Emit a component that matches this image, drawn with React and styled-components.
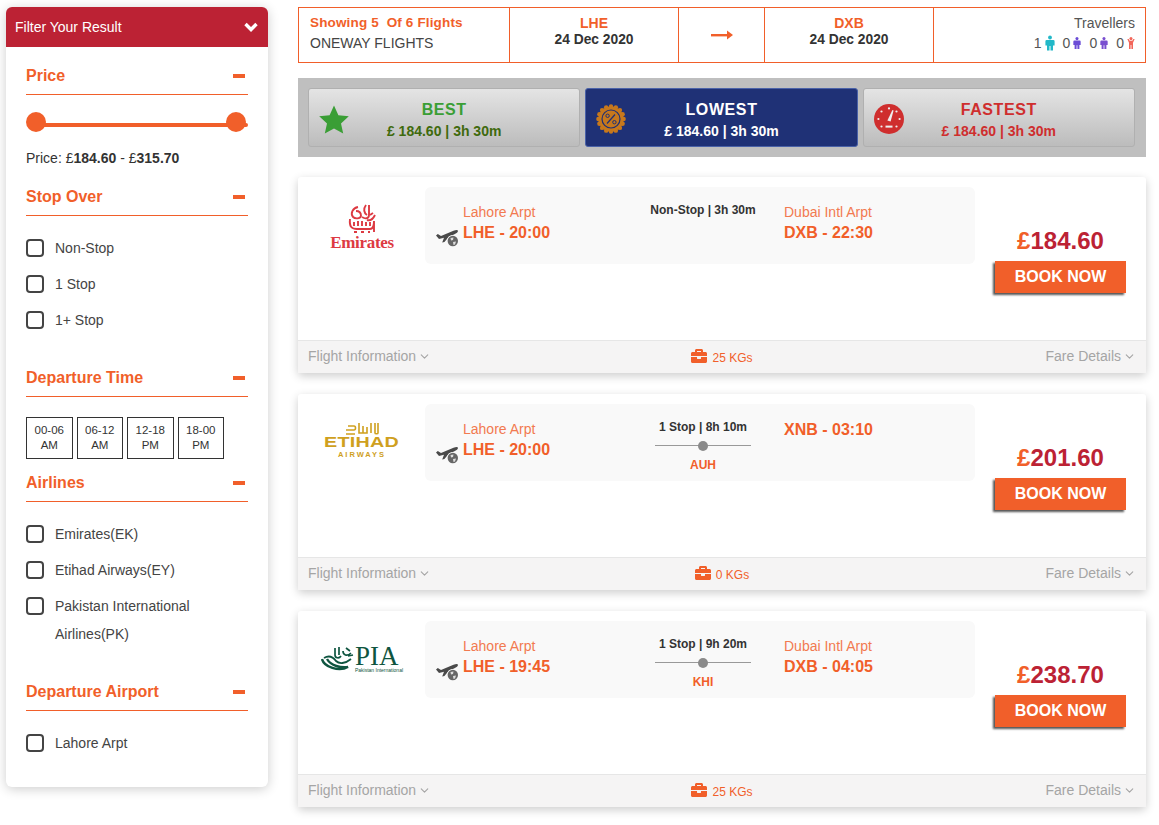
import React from "react";
import styled, { createGlobalStyle } from "styled-components";
import { FaBriefcase } from "react-icons/fa";
import { ChevronDown } from "lucide-react";

const ORANGE = "#f15f2a";
const RED = "#bc2234";

const GlobalStyle = createGlobalStyle`
  html, body {
    margin: 0;
    padding: 0;
    background: #fff;
    font-family: "Liberation Sans", Arial, sans-serif;
    color: #333;
  }
  * {
    box-sizing: border-box;
  }
`;

const Page = styled.div`
  display: flex;
  align-items: flex-start;
  gap: 30px;
  padding: 7px 13px 18px 6px;
`;

/* sidebar */
const Sidebar = styled.aside`
  width: 262px;
  flex: none;
  background: #fff;
  border-radius: 6px;
  box-shadow: 0 2px 12px rgba(0, 0, 0, 0.2);
  padding-bottom: 26px;
`;
const FilterHead = styled.div`
  height: 40px;
  background: ${RED};
  border-radius: 6px 6px 0 0;
  color: #fff;
  font-size: 14px;
  display: flex;
  align-items: center;
  justify-content: space-between;
  padding: 0 10px 0 9px;
`;
const Section = styled.section`
  padding: 0 20px;
  margin-top: ${props => props.$top}px;
`;
const SectionHead = styled.div`
  height: 32px;
  padding: 0 3px 5px 0;
  border-bottom: 1px solid ${ORANGE};
  color: ${ORANGE};
  font-size: 16px;
  font-weight: bold;
  line-height: 24px;
  display: flex;
  justify-content: space-between;
  align-items: center;
`;
const Minus = styled.span`
  width: 12px;
  height: 4px;
  background: ${ORANGE};
`;
const Slider = styled.div`
  height: 20px;
  margin-top: 17px;
  display: flex;
  justify-content: space-between;
  padding-right: 2px;
  position: relative;
  &::before {
    content: "";
    position: absolute;
    left: 2px;
    right: 0;
    top: 11px;
    height: 4px;
    border-radius: 2px;
    background: ${ORANGE};
  }
`;
const Knob = styled.span`
  width: 20px;
  height: 20px;
  border-radius: 50%;
  background: ${ORANGE};
  position: relative;
`;
const PriceText = styled.div`
  font-size: 14px;
  line-height: 22px;
  margin-top: 15px;
  b {
    color: #333;
  }
`;
const CheckList = styled.div`
  margin-top: 14px;
`;
const CheckRow = styled.label`
  display: flex;
  align-items: flex-start;
  gap: 11px;
  padding: 4px 0;
  font-size: 14px;
  line-height: 28px;
  color: #444;
`;
const Box = styled.span`
  width: 18px;
  height: 18px;
  flex: none;
  margin-top: 5px;
  border: 2px solid #444;
  border-radius: 4px;
  background: #fff;
`;
const TimeRow = styled.div`
  display: flex;
  gap: 4px;
  margin-top: 20px;
`;
const TimeBox = styled.div`
  width: 46.5px;
  height: 42px;
  border: 1px solid #333;
  font-size: 11.5px;
  line-height: 15px;
  text-align: center;
  color: #333;
  display: flex;
  flex-direction: column;
  justify-content: center;
`;

/* right side */
const Main = styled.main`
  width: 848px;
  flex: none;
`;
const Summary = styled.div`
  height: 56px;
  border: 1px solid ${ORANGE};
  display: grid;
  grid-template-columns: 210px 169px 86px 169px 1fr;
`;
const SummaryCell = styled.div`
  border-left: ${props => (props.$first ? "none" : `1px solid ${ORANGE}`)};
  display: flex;
  flex-direction: column;
  justify-content: center;
  align-items: center;
  padding-bottom: ${props => (props.$lift ? 4 : 0)}px;
`;
const ShowingCell = styled(SummaryCell)`
  align-items: flex-start;
  padding-left: 11px;
  font-size: 14px;
  line-height: 20px;
  color: #444;
`;
const Showing = styled.div`
  color: ${ORANGE};
  font-size: 13.5px;
  font-weight: bold;
  letter-spacing: 0.15px;
  white-space: pre;
`;
const Code = styled.div`
  color: ${ORANGE};
  font-size: 14px;
  font-weight: bold;
  line-height: 18px;
  margin-top: -4px;
`;
const DateText = styled.div`
  font-size: 13.8px;
  font-weight: bold;
  line-height: 16px;
`;
const TravellerCell = styled(SummaryCell)`
  align-items: flex-end;
  padding-right: 10px;
  font-size: 14px;
  color: #555;
  line-height: 20px;
`;
const TravellerRow = styled.div`
  display: flex;
  align-items: center;
  gap: 3px;
  height: 20px;
`;
const TravellerCount = styled.span`
  margin-left: ${props => (props.$first ? 0 : 5)}px;
`;
const Tabs = styled.div`
  margin-top: 15px;
  height: 79px;
  background: #bfbfbf;
  padding: 10px 11px 10px 10px;
  display: flex;
  gap: 5px;
`;
const Tab = styled.div`
  flex: 1;
  border-radius: 3px;
  border: 1px solid ${props => (props.$active ? "#4a62a8" : "#b0b0b0")};
  background: ${props =>
    props.$active ? "#1f3176" : "linear-gradient(#e4e4e4, #bcbcbc)"};
  display: grid;
  grid-template-columns: 1fr auto 1fr;
  align-items: center;
  padding: 0 10px;
  text-align: center;
`;
const TabIcon = styled.div`
  display: flex;
  margin-top: 3px;
`;
const TabText = styled.div`
  padding-top: 5px;
`;
const TabTitle = styled.div`
  color: ${props => props.$color};
  font-size: 16px;
  font-weight: bold;
  letter-spacing: 0.6px;
  line-height: 20px;
`;
const TabSub = styled.div`
  color: ${props => props.$color};
  font-size: 14px;
  font-weight: bold;
  line-height: 20px;
  margin-top: 1px;
`;
const Cards = styled.div`
  margin-top: 20px;
  display: flex;
  flex-direction: column;
  gap: 21px;
`;
const Card = styled.article`
  height: 196px;
  background: #fff;
  box-shadow: 0 3px 10px rgba(0, 0, 0, 0.2);
  border-radius: 3px;
  display: flex;
  flex-direction: column;
`;
const CardBody = styled.div`
  height: 163px;
  display: grid;
  grid-template-columns: 127px 550px 1fr;
  padding-top: 10px;
`;
const LogoCell = styled.div`
  display: flex;
  flex-direction: column;
  align-items: center;
  padding-top: ${props => props.$top}px;
  padding-left: 1px;
`;
const Route = styled.div`
  height: 77px;
  background: #f9f9f9;
  border-radius: 6px;
  display: grid;
  grid-template-columns: 204px 126px 1fr;
  padding: 16px 0 0 11px;
`;
const Origin = styled.div`
  display: flex;
  gap: 5px;
`;
const PlaneWrap = styled.div`
  width: 22px;
  height: 20px;
  margin-top: 25px;
  display: flex;
`;
const Place = styled.div`
  font-size: 14px;
  line-height: 18px;
  color: #f27a50;
`;
const Clock = styled.div`
  font-size: 16px;
  font-weight: bold;
  line-height: 18px;
  color: ${ORANGE};
  margin-top: 3px;
  &:first-child {
    margin-top: 1px;
  }
`;
const Middle = styled.div`
  display: flex;
  flex-direction: column;
  align-items: center;
  margin-top: -1px;
  padding: 0 15px;
`;
const Duration = styled.div`
  font-size: 12px;
  font-weight: bold;
  line-height: 16px;
  color: #333;
  white-space: nowrap;
`;
const StopLine = styled.div`
  width: 96px;
  height: 10px;
  margin-top: 6px;
  display: flex;
  justify-content: center;
  position: relative;
  &::before {
    content: "";
    position: absolute;
    left: 0;
    right: 0;
    top: 4px;
    height: 1px;
    background: #999;
  }
`;
const StopDot = styled.span`
  width: 10px;
  height: 10px;
  border-radius: 50%;
  background: #8a8a8a;
  position: relative;
`;
const StopCode = styled.div`
  font-size: 12px;
  font-weight: bold;
  line-height: 14px;
  color: ${ORANGE};
  margin-top: 7px;
`;
const Destination = styled.div`
  padding-left: 18px;
`;
const PriceCell = styled.div`
  display: flex;
  flex-direction: column;
  align-items: center;
  padding-top: 40px;
`;
const Amount = styled.div`
  font-size: 24px;
  font-weight: bold;
  line-height: 28px;
  color: ${RED};
  span {
    color: ${ORANGE};
  }
`;
const BookNow = styled.button`
  width: 131px;
  height: 32px;
  margin-top: 6px;
  border: none;
  background: ${ORANGE};
  color: #fff;
  font-family: inherit;
  font-size: 16px;
  font-weight: bold;
  padding: 0;
  box-shadow: -2px 2px 2px #555;
`;
const CardFoot = styled.div`
  height: 33px;
  background: #f5f4f4;
  border-top: 1px solid #e6e6e6;
  display: grid;
  grid-template-columns: 1fr auto 1fr;
  align-items: center;
  padding: 0 10px;
  font-size: 14px;
  color: #a5a5a5;
`;
const FootLink = styled.div`
  display: flex;
  align-items: center;
  gap: 2px;
  padding-bottom: 2px;
  justify-content: ${props => (props.$end ? "flex-end" : "flex-start")};
`;
const Baggage = styled.div`
  display: flex;
  align-items: center;
  gap: 5px;
  color: ${ORANGE};
  font-size: 12px;
  svg {
    margin-top: -3px;
  }
  span {
    margin-top: 2px;
  }
`;

/* logos */
const EmiratesWord = styled.div`
  font-family: "Liberation Serif", serif;
  font-weight: bold;
  font-size: 17px;
  line-height: 15px;
  color: #dd3a42;
  letter-spacing: -0.3px;
`;
const EtihadWord = styled.div`
  font-size: 14.5px;
  font-weight: bold;
  line-height: 14px;
  color: #cfa01e;
  transform: scaleX(1.36);
  letter-spacing: 0.2px;
`;
const EtihadSub = styled.div`
  font-size: 7.5px;
  font-weight: bold;
  line-height: 10px;
  letter-spacing: 2px;
  color: #cfa01e;
  margin-top: 1px;
`;
const PiaRow = styled.div`
  display: flex;
  align-items: flex-end;
  gap: 1px;
`;
const PiaStack = styled.div`
  display: flex;
  flex-direction: column;
  align-items: flex-start;
`;
const PiaWord = styled.div`
  font-family: "Liberation Serif", serif;
  font-size: 27px;
  line-height: 22px;
  color: #0f5540;
`;
const PiaSub = styled.div`
  font-size: 5px;
  line-height: 6px;
  color: #0f5540;
  white-space: nowrap;
`;

const WhiteChevron = () => (
  <svg width="14" height="10" viewBox="0 0 14 10">
    <polyline points="1.5,2 7,7.5 12.5,2" fill="none" stroke="#fff" strokeWidth="3.4" />
  </svg>
);

const LongArrow = () => (
  <svg width="22" height="12" viewBox="0 0 22 12">
    <rect x="0" y="5" width="18" height="2.4" fill={ORANGE} />
    <polygon points="16,1.5 22,6 16,10.5" fill={ORANGE} />
  </svg>
);

const Person = ({ color, w, h, arms }) => (
  <svg width={w} height={h} viewBox="0 0 12 18">
    <circle cx="6" cy="2.4" r="2.3" fill={color} />
    {arms ? (
      <path
        d="M0.5 3 L2.5 3 L4 5.5 L8 5.5 L9.5 3 L11.5 3 L9 8.5 L9 18 L6.6 18 L6.6 12 L5.4 12 L5.4 18 L3 18 L3 8.5 Z"
        fill={color}
      />
    ) : (
      <path
        d="M2 5.4 L10 5.4 Q11.5 5.4 11.5 7 L11.5 12 L9.6 12 L9.6 18 L6.6 18 L6.6 12.5 L5.4 12.5 L5.4 18 L2.4 18 L2.4 12 L0.5 12 L0.5 7 Q0.5 5.4 2 5.4 Z"
        fill={color}
      />
    )}
  </svg>
);

const Star = () => (
  <svg width="30" height="29" viewBox="0 0 30 29">
    <polygon
      points="15,0.5 19.4,10.2 29.8,11.3 22,18.4 24.2,28.6 15,23.4 5.8,28.6 8,18.4 0.2,11.3 10.6,10.2"
      fill="#3a9e35"
    />
  </svg>
);

const PercentBadge = () => {
  const teeth = [];
  for (let i = 0; i < 16; i++) {
    teeth.push(
      <circle
        key={i}
        cx={15 + 12.6 * Math.cos((i * Math.PI) / 8)}
        cy={15 + 12.6 * Math.sin((i * Math.PI) / 8)}
        r="2.2"
        fill="#c7781c"
      />
    );
  }
  return (
    <svg width="30" height="30" viewBox="0 0 30 30">
      {teeth}
      <circle cx="15" cy="15" r="12.6" fill="#c7781c" />
      <circle cx="15" cy="15" r="9" fill="none" stroke="#1f3176" strokeWidth="1.2" />
      <line x1="19" y1="10.5" x2="11" y2="19.5" stroke="#1f3176" strokeWidth="1.2" />
      <circle cx="11.6" cy="11.8" r="1.7" fill="none" stroke="#1f3176" strokeWidth="1" />
      <circle cx="18.4" cy="18.2" r="1.7" fill="none" stroke="#1f3176" strokeWidth="1" />
    </svg>
  );
};

const Gauge = () => (
  <svg width="30" height="30" viewBox="0 0 30 30">
    <circle cx="15" cy="15" r="15" fill="#cf2e2e" />
    <path d="M18.4 6 L19.6 6.5 L16.6 17.5 L13.4 16.5 Z" fill="#eee" />
    <rect x="11.5" y="21.6" width="7" height="2" fill="#eee" />
    <circle cx="15" cy="4.4" r="1.1" fill="#eee" />
    <circle cx="7.5" cy="7.5" r="1.1" fill="#eee" />
    <circle cx="4.4" cy="15" r="1.1" fill="#eee" />
    <circle cx="25.6" cy="15" r="1.1" fill="#eee" />
    <circle cx="22.5" cy="7.5" r="1.1" fill="#eee" />
    <circle cx="7.5" cy="22.5" r="1.1" fill="#eee" />
    <circle cx="22.5" cy="22.5" r="1.1" fill="#eee" />
  </svg>
);

const PlaneGlobe = () => (
  <svg width="22" height="20" viewBox="0 0 22 20">
    <path
      d="M0 7.5 L1.8 6 L5 8 L17.5 2.8 Q21.4 1.4 22 2.8 Q22 4.8 18 6.5 L13 8.6 L8.4 14 L6.2 14.6 L8 9.8 L3 11 Z"
      fill="#4a4a4a"
    />
    <circle cx="16.8" cy="13" r="6" fill="#f9f9f9" />
    <circle cx="16.8" cy="13" r="5.2" fill="#666" />
    <path d="M14.5 10 L17.5 9.5 L17 12 L15 12.5 Z M17 14 L20 13.5 L19 16.5 L17.5 17 Z" fill="#ddd" />
  </svg>
);

const EmiratesLogo = () => (
  <LogoCell $top={17}>
    <svg width="28" height="31" viewBox="0 0 28 31" fill="none" stroke="#dd3a42" strokeWidth="1.9">
      <path d="M18 1 C15 5 16 9 19 11 M21 1 L21 11 C21 15 17 15 14 13" />
      <path d="M10 3 C5 4 2 9 5 13 C7 15 12 15 13 12 C13 8 10 7 8 7" />
      <path d="M27 11 C25 15 22 17 19 16 M25 9 L22 11" />
      <path d="M2 15 C1 23 4 25 9 25 L22 25 C25 25 26 22 26 17 L26 28" />
      <path d="M6 18 L6 22 M10 17 L10 22 M14 17 L14 22 M18 18 L18 22 M22 18 L22 22" />
      <path d="M6 28 L9 28 M13 28 L16 28 M20 28 L22 28" />
    </svg>
    <EmiratesWord>Emirates</EmiratesWord>
  </LogoCell>
);

const EtihadLogo = () => (
  <LogoCell $top={18}>
    <svg width="34" height="13" viewBox="0 0 34 13" fill="none" stroke="#cfa01e" strokeWidth="1.6">
      <path d="M1 8 L9 8 C11 8 11 4 9 4 L3 4 M1 12 L10 12" />
      <path d="M14 1 L14 11 L22 11 L22 5 M18 4 L18 11" />
      <path d="M26 1 L26 11 M30 1 L30 11 C30 12 33 12 33 11 L33 1" />
    </svg>
    <EtihadWord>ETIHAD</EtihadWord>
    <EtihadSub>AIRWAYS</EtihadSub>
  </LogoCell>
);

const PiaLogo = () => (
  <LogoCell $top={24}>
    <PiaRow>
      <svg width="33" height="27" viewBox="0 0 33 27" fill="none" stroke="#0f5540" strokeWidth="2.4">
        <path d="M1 13 C3 21 18 26 27 21 C20 22 10 20 6 13" />
        <path d="M3 12 C8 9 12 11 15 15 C18 18 24 18 30 13" strokeWidth="1.8" />
        <path d="M14 2 L14 9 C14 12 18 13 20 10 M18 1 L18 9 M22 5 C22 9 26 11 30 7 M25 2 L29 5 M27 10 L32 9" strokeWidth="1.7" />
      </svg>
      <PiaStack>
        <PiaWord>PIA</PiaWord>
        <PiaSub>Pakistan International</PiaSub>
      </PiaStack>
    </PiaRow>
  </LogoCell>
);

const flights = [
  {
    id: "ek",
    Logo: EmiratesLogo,
    time: "LHE - 20:00",
    duration: "Non-Stop | 3h 30m",
    arrivalName: "Dubai Intl Arpt",
    arrival: "DXB - 22:30",
    price: "184.60",
    bags: "25 KGs"
  },
  {
    id: "ey",
    Logo: EtihadLogo,
    time: "LHE - 20:00",
    duration: "1 Stop | 8h 10m",
    stop: "AUH",
    arrival: "XNB - 03:10",
    price: "201.60",
    bags: "0 KGs"
  },
  {
    id: "pk",
    Logo: PiaLogo,
    time: "LHE - 19:45",
    duration: "1 Stop | 9h 20m",
    stop: "KHI",
    arrivalName: "Dubai Intl Arpt",
    arrival: "DXB - 04:05",
    price: "238.70",
    bags: "25 KGs"
  }
];

const tabs = [
  { title: "BEST", color: "#3a9e35", sub: "#3f6a0d", Icon: Star },
  { title: "LOWEST", color: "#fff", sub: "#fff", Icon: PercentBadge, active: true },
  { title: "FASTEST", color: "#cf2e2e", sub: "#cf2e2e", Icon: Gauge }
];

const Heading = ({ children }) => (
  <SectionHead>
    {children}
    <Minus />
  </SectionHead>
);

const Check = ({ label }) => (
  <CheckRow>
    <Box />
    <span>{label}</span>
  </CheckRow>
);

const Filters = () => (
  <Sidebar>
    <FilterHead>
      Filter Your Result
      <WhiteChevron />
    </FilterHead>
    <Section $top={16}>
      <Heading>Price</Heading>
      <Slider>
        <Knob />
        <Knob />
      </Slider>
      <PriceText>
        Price: £<b>184.60</b> - £<b>315.70</b>
      </PriceText>
    </Section>
    <Section $top={15}>
      <Heading>Stop Over</Heading>
      <CheckList>
        <Check label="Non-Stop" />
        <Check label="1 Stop" />
        <Check label="1+ Stop" />
      </CheckList>
    </Section>
    <Section $top={27}>
      <Heading>Departure Time</Heading>
      <TimeRow>
        <TimeBox>00-06<br />AM</TimeBox>
        <TimeBox>06-12<br />AM</TimeBox>
        <TimeBox>12-18<br />PM</TimeBox>
        <TimeBox>18-00<br />PM</TimeBox>
      </TimeRow>
    </Section>
    <Section $top={11}>
      <Heading>Airlines</Heading>
      <CheckList>
        <Check label="Emirates(EK)" />
        <Check label="Etihad Airways(EY)" />
        <Check label="Pakistan International Airlines(PK)" />
      </CheckList>
    </Section>
    <Section $top={27}>
      <Heading>Departure Airport</Heading>
      <CheckList>
        <Check label="Lahore Arpt" />
      </CheckList>
    </Section>
  </Sidebar>
);

const FlightCard = ({ flight }) => {
  const { Logo } = flight;
  return (
    <Card>
      <CardBody>
        <Logo />
        <Route>
          <Origin>
            <PlaneWrap>
              <PlaneGlobe />
            </PlaneWrap>
            <div>
              <Place>Lahore Arpt</Place>
              <Clock>{flight.time}</Clock>
            </div>
          </Origin>
          <Middle>
            <Duration>{flight.duration}</Duration>
            {flight.stop && (
              <>
                <StopLine>
                  <StopDot />
                </StopLine>
                <StopCode>{flight.stop}</StopCode>
              </>
            )}
          </Middle>
          <Destination>
            {flight.arrivalName && <Place>{flight.arrivalName}</Place>}
            <Clock>{flight.arrival}</Clock>
          </Destination>
        </Route>
        <PriceCell>
          <Amount>
            <span>£</span>
            {flight.price}
          </Amount>
          <BookNow>BOOK NOW</BookNow>
        </PriceCell>
      </CardBody>
      <CardFoot>
        <FootLink>
          Flight Information <ChevronDown size={13} />
        </FootLink>
        <Baggage>
          <FaBriefcase size={16} />
          <span>{flight.bags}</span>
        </Baggage>
        <FootLink $end>
          Fare Details <ChevronDown size={13} />
        </FootLink>
      </CardFoot>
    </Card>
  );
};

export default function App() {
  return (
    <Page>
      <GlobalStyle />
      <Filters />
      <Main>
        <Summary>
          <ShowingCell $first $lift>
            <Showing>Showing 5  Of 6 Flights</Showing>
            <div>ONEWAY FLIGHTS</div>
          </ShowingCell>
          <SummaryCell $lift>
            <Code>LHE</Code>
            <DateText>24 Dec 2020</DateText>
          </SummaryCell>
          <SummaryCell>
            <LongArrow />
          </SummaryCell>
          <SummaryCell $lift>
            <Code>DXB</Code>
            <DateText>24 Dec 2020</DateText>
          </SummaryCell>
          <TravellerCell $lift>
            <div>Travellers</div>
            <TravellerRow>
              <TravellerCount $first>1</TravellerCount>
              <Person color="#22b8c8" w={10} h={16} />
              <TravellerCount>0</TravellerCount>
              <Person color="#6a4cd6" w={8} h={12} />
              <TravellerCount>0</TravellerCount>
              <Person color="#7a4fd0" w={8} h={12} />
              <TravellerCount>0</TravellerCount>
              <Person color="#f2665a" w={8} h={12} arms />
            </TravellerRow>
          </TravellerCell>
        </Summary>
        <Tabs>
          {tabs.map(({ title, color, sub, Icon, active }) => (
            <Tab key={title} $active={active}>
              <TabIcon>
                <Icon />
              </TabIcon>
              <TabText>
                <TabTitle $color={color}>{title}</TabTitle>
                <TabSub $color={sub}>£ 184.60 | 3h 30m</TabSub>
              </TabText>
            </Tab>
          ))}
        </Tabs>
        <Cards>
          {flights.map(flight => (
            <FlightCard key={flight.id} flight={flight} />
          ))}
        </Cards>
      </Main>
    </Page>
  );
}
